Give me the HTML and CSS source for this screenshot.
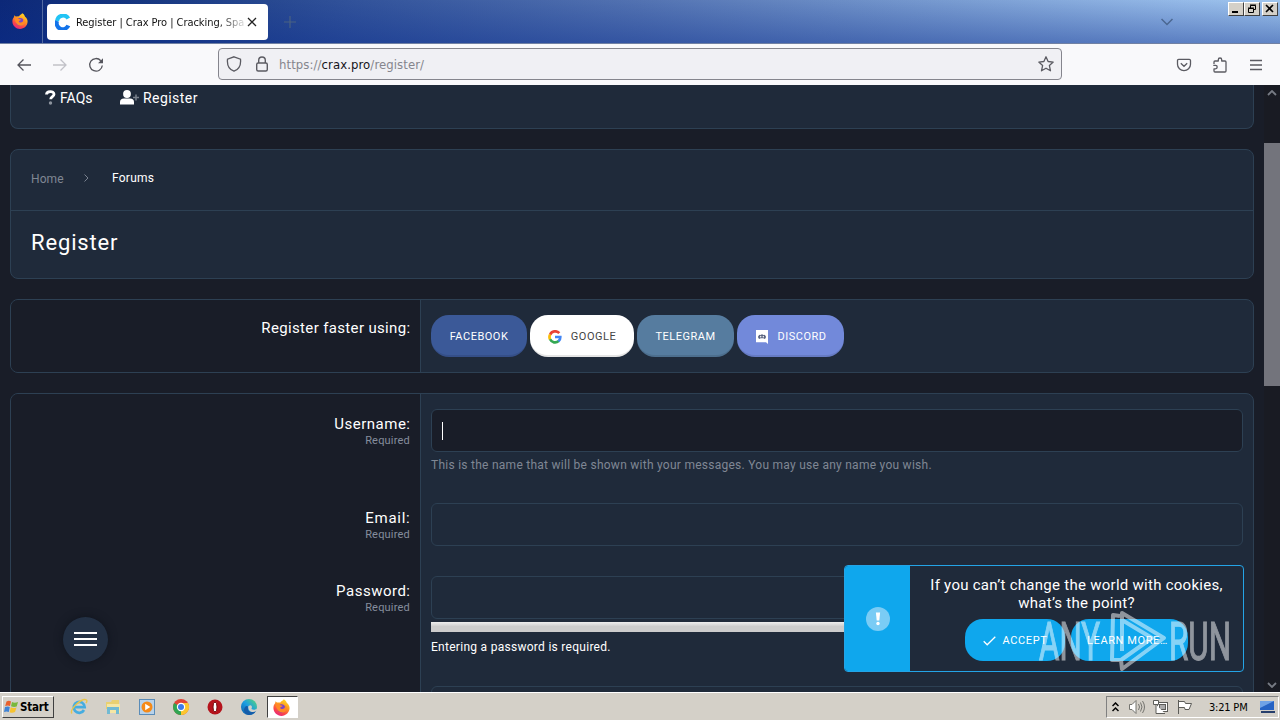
FILE: index.html
```html
<!DOCTYPE html>
<html lang="en">
<head>
<meta charset="utf-8">
<title>Register | Crax Pro</title>
<link rel="stylesheet" href="styles.css">
</head>
<body>
<svg width="0" height="0" class="defs">
  <defs>
    <linearGradient id="fox" x1=".8" y1="0" x2=".3" y2="1"><stop offset="0" stop-color="#ffe226"/><stop offset=".4" stop-color="#ff9a1f"/><stop offset=".75" stop-color="#fb4648"/><stop offset="1" stop-color="#e5257f"/></linearGradient>
    <symbol id="firefox" viewBox="0 0 16 16">
      <path d="M10.2.2c2 1.100 2.500 2.500 2.900 3.600 1.600 1.300 2.600 3 2.500 5C15.400 13 12 15.900 8 15.900S.5 12.700.4 8.700C.3 6.500 1 5 2 3.900l.4-1.700 1.300 1.200L7 3.200C7.500 1.800 9.200 1.900 10.200.2z" fill="url(#fox)"/>
      <circle cx="8" cy="8.800" r="3.900" fill="#7a45c7"/>
      <path d="M2.500 5c2-.8 3.400-.2 4.500.9l2 .5c-.2 1-1.200 1.100-2.200 1.500.1 1.900 2.600 2 3.800.9 1-1 .7-2.500-.3-3.400 3 1 3.400 4.500 1.200 6.400-3.200 2.500-8.300 0-9-6.800z" fill="#ff8a25"/>
    </symbol>
    <linearGradient id="edge" x1="0" y1="1" x2="1" y2="0"><stop offset="0" stop-color="#0c59a4"/><stop offset=".5" stop-color="#1b9de2"/><stop offset="1" stop-color="#5edb72"/></linearGradient>
  </defs>
</svg>
<div class="screen">
  <header class="tabs">
    <div class="view"><svg width="16" height="16"><use href="#firefox"/></svg></div>
    <div class="tab">
      <svg width="16" height="16" viewBox="0 0 16 16" fill="none" stroke-width="4"><path d="M13.300 4.600A6 6 0 0 0 2.100 7" stroke="#22c4f5"/><path d="M2.100 7a6 6 0 0 0 11.200 4.400" stroke="#1273ea"/></svg>
      <span class="tab-title">Register | Crax Pro | Cracking, Spa</span>
      <svg class="close" width="10" height="10" viewBox="0 0 10 10" stroke="#222" stroke-width="1.300"><path d="M1 1l8 8M9 1l-8 8"/></svg>
    </div>
    <svg class="plus" width="12" height="12" viewBox="0 0 12 12" stroke="#4a6282" stroke-width="1.200"><path d="M6 0v12M0 6h12"/></svg>
    <svg class="chev" width="12" height="8" viewBox="0 0 12 8" fill="none" stroke="#4b6791" stroke-width="1.500"><path d="M.5 1L6 6.500 11.500 1"/></svg>
    <div class="winbtns">
      <span class="wb"><svg width="13" height="11"><path d="M3 9h6" stroke="#000" stroke-width="2"/></svg></span>
      <span class="wb"><svg width="13" height="11" fill="none" stroke="#000"><path d="M5.500 5V2.500h5v4H9M5 2h6"/><path d="M3.500 5.500h5v4h-5zM3 5h6"/></svg></span>
      <span class="wb last"><svg width="13" height="11"><path d="M3 2l7 7M10 2L3 9" stroke="#000" stroke-width="1.600"/></svg></span>
    </div>
  </header>
  <div class="toolbar">
    <div class="navs">
      <svg width="16" height="16" viewBox="0 0 16 16" fill="none" stroke="#55555c" stroke-width="1.300"><path d="M15 8H2M7.500 2.500L2 8l5.500 5.500"/></svg>
      <svg width="16" height="16" viewBox="0 0 16 16" fill="none" stroke="#c2c2c8" stroke-width="1.300"><path d="M1 8h13M8.500 2.500L14 8l-5.500 5.500"/></svg>
      <svg width="16" height="16" viewBox="0 0 16 16" fill="none" stroke="#55555c" stroke-width="1.300"><path d="M12.800 3.700A6.300 6.300 0 1 0 14.300 8.500"/><path d="M10 6.200h5V1.300z" fill="#55555c" stroke="none"/></svg>
    </div>
    <div class="url">
      <svg width="16" height="16" viewBox="0 0 16 16" fill="none" stroke="#5b5b62" stroke-width="1.300"><path d="M8 .8l6.500 2.400c.5 5-1 10-6.500 12C2.500 13.200 1 8.200 1.500 3.200z"/></svg>
      <svg width="16" height="16" viewBox="0 0 16 16" fill="none" stroke="#5b5b62" stroke-width="1.400"><rect x="2.700" y="7" width="10.600" height="8" rx="1.500"/><path d="M4.700 7V4.300a3.300 3.300 0 0 1 6.600 0V7"/></svg>
      <span class="addr">https://<b>crax.pro</b>/register/</span>
      <svg class="star" width="16" height="16" viewBox="0 0 16 16" fill="none" stroke="#5b5b62" stroke-width="1.300" stroke-linejoin="round"><path d="M8 .8l2.100 4.700 5.100.6-3.800 3.500 1.100 5.200L8 12.200l-4.500 2.600 1.100-5.200L.8 6.100l5.100-.6z"/></svg>
    </div>
    <div class="tools">
      <svg width="16" height="16" viewBox="0 0 16 16" fill="none" stroke="#5b5b62" stroke-width="1.300"><path d="M1.500 3.500a1.200 1.200 0 0 1 1.200-1.200h10.600a1.200 1.200 0 0 1 1.200 1.200V7.200a6.500 6.500 0 0 1-13 0zM4.800 6.300L8 9.300l3.200-3"/></svg>
      <svg width="16" height="16" viewBox="0 0 16 16" fill="none" stroke="#5b5b62" stroke-width="1.300" stroke-linejoin="round"><path d="M2 7V5q0-1 1-1h3.300V2.700a1.700 1.700 0 0 1 3.400 0V4H13q1 0 1 1v9q0 1-1 1H3q-1 0-1-1v-2.200h1.500a1.700 1.700 0 0 0 0-3.400H1.300"/></svg>
      <svg width="16" height="16" viewBox="0 0 16 16" stroke="#5b5b62" stroke-width="1.300"><path d="M2 3.500h12M2 8h12M2 12.500h12"/></svg>
    </div>
  </div>
  <main class="page">
    <div class="content">
      <nav class="card menu">
        <svg width="11" height="15" viewBox="0 0 11 15" fill="none"><path d="M1.500 4.500C1.500.8 9 .4 9 4.300c0 2.500-3.300 2.200-3.300 5" stroke="#fff" stroke-width="2.800"/><circle cx="5.500" cy="13" r="1.700" fill="#8d949e"/></svg>
        <span class="faq">FAQs</span>
        <svg class="user" width="20" height="15" viewBox="0 0 20 15"><circle cx="7" cy="4" r="3.900" fill="#fff"/><path d="M0 14.500V12q0-3.500 4-3.500h6q4 0 4 3.500v2.500z" fill="#fff"/><path d="M16 4.500v6M13 7.500h6" stroke="#79818c" stroke-width="1.500"/></svg>
        <span class="reg">Register</span>
      </nav>
      <section class="card head">
        <div class="crumbs"><span class="home">Home</span><svg width="6" height="8" viewBox="0 0 6 8" fill="none" stroke="#79818f"><path d="M1.500.5L5 4 1.500 7.500"/></svg><span class="forums">Forums</span></div>
        <h1 class="title">Register</h1>
      </section>
      <section class="card split fast">
        <div class="left"><div class="label faster">Register faster using:</div></div>
        <div class="right providers">
          <span class="btn fb">FACEBOOK</span>
          <span class="btn gg"><svg width="14" height="14" viewBox="0 0 14 14" fill="none" stroke-width="2.700"><path d="M11.300 3.200A5.500 5.500 0 0 0 2.100 4.700" stroke="#ea4335"/><path d="M2.100 4.500a5.500 5.500 0 0 0 0 5" stroke="#fbbc05"/><path d="M2.100 9.300a5.500 5.500 0 0 0 8.600 1.800" stroke="#34a853"/><path d="M10.500 11.200A5.400 5.400 0 0 0 12.300 7H7" stroke="#4285f4"/></svg>GOOGLE</span>
          <span class="btn tg">TELEGRAM</span>
          <span class="btn dc"><svg width="14" height="14" viewBox="0 0 14 14"><path d="M1 0h12v14l-2-1.800H1z" fill="#fff"/><path d="M3 6.700l1.200-2 1.300.6.5-.8h2l.5.800 1.300-.6 1.200 2-.4 1.500-1.300.8-.8-.8h-3l-.8.800-1.300-.8z" fill="#5a6480"/><circle cx="5.700" cy="6.700" r=".8" fill="#fff"/><circle cx="8.300" cy="6.700" r=".8" fill="#fff"/></svg>DISCORD</span>
        </div>
      </section>
      <section class="card split form">
        <div class="left">
          <div class="field f1"><div class="label user-l">Username:</div><div class="req">Required</div></div>
          <div class="field f2"><div class="label email-l">Email:</div><div class="req">Required</div></div>
          <div class="field f3"><div class="label pass-l">Password:</div><div class="req">Required</div></div>
        </div>
        <div class="right inputs">
          <div class="input focus"><i class="caret"></i></div>
          <p class="hint">This is the name that will be shown with your messages. You may use any name you wish.</p>
          <div class="input email"></div>
          <div class="input pass"></div>
          <div class="meter"></div>
          <p class="needed">Entering a password is required.</p>
          <div class="input next"></div>
        </div>
      </section>
    </div>
    <div class="scroll">
      <svg width="10" height="6" viewBox="0 0 10 6" fill="none" stroke="#777b84" stroke-width="1.800"><path d="M1 5l4-4 4 4"/></svg>
      <div class="thumb"></div>
      <svg class="down" width="10" height="6" viewBox="0 0 10 6" fill="none" stroke="#777b84" stroke-width="1.800"><path d="M1 1l4 4 4-4"/></svg>
    </div>
    <div class="fab"><i></i><i></i><i></i></div>
    <aside class="cookie">
      <div class="mark"><svg width="24" height="24" viewBox="0 0 24 24"><circle cx="12" cy="12" r="12" fill="#7accf5"/><path d="M9.900 5.500h4.200l-.8 8h-2.600z" fill="#fff"/><circle cx="12" cy="16.500" r="1.700" fill="#fff"/></svg></div>
      <div class="cookie-body">
        <p class="c1">If you can’t change the world with cookies,</p>
        <p class="c2">what’s the point?</p>
        <div class="cookie-btns">
          <span class="cbtn accept"><svg width="13" height="10" viewBox="0 0 13 10" fill="none" stroke="#fff" stroke-width="1.300"><path d="M.7 5.300l3.500 3.500L12.300.7"/></svg>ACCEPT</span>
          <span class="cbtn more">LEARN MORE…</span>
        </div>
      </div>
    </aside>
    <svg class="wm" width="205" height="66" viewBox="1035 607 205 66">
      <g opacity=".5" fill="#fff" stroke="#fff" font-family="Roboto, sans-serif" font-size="53">
        <text stroke-width="1.200" x="1039" y="660" textLength="61" lengthAdjust="spacingAndGlyphs">ANY</text>
        <text stroke-width="1.200" x="1169" y="660" textLength="62" lengthAdjust="spacingAndGlyphs">RUN</text>
        <g fill="none" stroke-width="4" stroke-linejoin="round"><path d="M1122 651V613l42 25-42 31-1-9 31-22-30-18"/><path d="M1120 616l-7-1-1 45h8"/></g>
      </g>
    </svg>
  </main>
  <footer class="taskbar">
    <div class="start"><svg width="15" height="14" viewBox="0 0 15 14"><path d="M2.500 1.500Q5 0 7 1.500L6 6Q4 5 1.200 6z" fill="#e8602c"/><path d="M8 2q2.500 1.300 6 0l-1.300 4.500Q10 7.500 7 6.300z" fill="#79b83c"/><path d="M1 7q3-1 4.800 0l-1 5Q2.500 11 0 12z" fill="#3f83d5"/><path d="M6.700 7.300q2.600 1.300 5.800.2L11 12q-2.500 1.500-5.300.3z" fill="#f6c22f"/></svg><span>Start</span></div>
    <div class="apps">
      <svg width="18" height="18" viewBox="0 0 18 18" fill="none"><path d="M14 12a5.500 5.500 0 1 1 .7-2.800H5" stroke="#46ade0" stroke-width="2.700"/><path d="M2 15.500C-1 12 12-1 16.500 2q1 1-.5 3" stroke="#e9c54a" stroke-width="1.400"/></svg>
      <svg width="18" height="18" viewBox="0 0 18 18"><path d="M2 4h5l1-2h7v9H2z" fill="#e9d071"/><path d="M3 6h13v9H3z" fill="#f5e6a4"/><path d="M3 9h12v7h-3v-4H6v4H3z" fill="#72bad3"/></svg>
      <svg width="18" height="18" viewBox="0 0 18 18"><rect x="1.500" y="1.500" width="15" height="15" fill="#b8d2ea" stroke="#5a8cb8"/><circle cx="9" cy="9" r="5.500" fill="#f58a18"/><path d="M7.200 5.800L12.300 9l-5.100 3.200z" fill="#fff"/></svg>
      <svg width="18" height="18" viewBox="0 0 18 18"><circle cx="9" cy="9" r="8" fill="#e04436"/><path d="M9 9L2.100 5A8 8 0 0 0 9 17l3.500-6z" fill="#31a552"/><path d="M9 9v8a8 8 0 0 0 7-12H9z" fill="#fcc62e"/><circle cx="9" cy="9" r="4.200" fill="#fff"/><circle cx="9" cy="9" r="3" fill="#3d7bea"/></svg>
      <svg width="18" height="18" viewBox="0 0 18 18"><circle cx="9" cy="9" r="7.500" fill="#b5131c"/><ellipse cx="9" cy="9" rx="2" ry="5" fill="#fff" stroke="#750a0f"/></svg>
      <svg width="18" height="18" viewBox="0 0 18 18"><circle cx="9" cy="9" r="8" fill="url(#edge)"/><path d="M8 8.500q-1 5 3.500 5.500 3 0 5-1.500-4 6-9.500 4-5-3-2-7.500 1.500-1.500 3-.5z" fill="#155ca9"/><path d="M8.500 8q3-2 3.500 1-.5 1.500-.5 2 2 1.500 5 0L17.500 12q-3 3-7 1.500-3-2-2-5.500z" fill="#d4d0c8"/></svg>
      <div class="active"><svg width="17" height="17"><use href="#firefox"/></svg></div>
    </div>
    <div class="tray">
      <svg class="up" width="7" height="10" viewBox="0 0 7 10" fill="none" stroke="#000" stroke-width="1.500"><path d="M.5 4l3-3 3 3M.5 9l3-3 3 3"/></svg>
      <svg width="17" height="16" viewBox="0 0 17 16" fill="#fff" stroke="#74746f"><path d="M1.500 5.500H4l4-4v13l-4-4H1.500z"/><path d="M10.500 5q2 3 0 6M12.500 3.500q3 4.500 0 9M14.500 2q4 6 0 12" fill="none"/></svg>
      <svg width="17" height="16" viewBox="0 0 17 16" fill="#fff" stroke="#5c5c58"><rect x="5.500" y="3.500" width="10" height="9"/><rect x="7.500" y="5.500" width="6" height="5" fill="#aaa"/><path d="M1.500 1.500h5v4h-5zM4 5.500v9h9"/></svg>
      <svg width="17" height="16" viewBox="0 0 17 16" fill="#fff" stroke="#5c5c58"><path d="M2.500 1v14M2.500 2.500h6l1 2h6l-2.500 6H9l-.5-2h-6"/></svg>
      <span class="clock">3:21 PM</span>
      <svg class="desk" width="17" height="14" viewBox="0 0 17 14"><path d="M1 1h14v9H1z" fill="#2663c4"/><path d="M1 1h14L1 8z" fill="#6fa2e6"/><path d="M2 11h14v2H2z" fill="#263e6b"/></svg>
    </div>
  </footer>
</div>
</body>
</html>
```
FILE: styles.css
```css
* { box-sizing: border-box; }
body { margin: 0; font-family: Roboto, sans-serif; }
p, h1 { margin: 0; font-weight: 400; }
svg { display: block; flex: none; }
.defs { position: absolute; }
.screen { width: 1280px; height: 720px; overflow: hidden; display: flex; flex-direction: column; }
.tabs { height: 44px; flex: none; display: flex; align-items: center; border-bottom: 1px solid #7181a3;
  background: linear-gradient(rgba(10,36,120,0), rgba(10,44,140,.42)), linear-gradient(97deg, #0c2878 0, #16367f 10%, #31529a 27%, #5373b2 50%, #7699cf 72%, #95bae8 92%, #a0c6ee 100%); }
.view { width: 43px; height: 43px; padding: 13px 0 0 12px; border-right: 1px solid #536ba2; }
.tab { width: 221px; height: 36px; margin-left: 4px; padding: 0 10px 0 8px; background: #fff; border-radius: 4px; display: flex; align-items: center; }
.tab-title { width: 168px; margin: 1px 0 0 5px; white-space: nowrap; font: 11px "DejaVu Sans Condensed", "DejaVu Sans", sans-serif; font-stretch: condensed; letter-spacing: -.05px; color: transparent; background: linear-gradient(90deg, #111 85%, #ddd 100%); background-clip: text; -webkit-background-clip: text; }
.close { margin-left: 3px; }
.plus { margin-left: 16px; }
.chev { margin-left: 865px; }
.winbtns { display: flex; margin: 0 2px 0 auto; align-self: flex-start; padding-top: 2px; }
.wb { width: 16px; height: 14px; background: #d4d0c8; border: 1px solid; border-color: #fff #404040 #404040 #fff; }
.wb.last { margin-left: 2px; }
.toolbar { height: 41px; flex: none; display: flex; align-items: center; background: #f9f9fb; }
.navs { width: 218px; display: flex; gap: 20px; padding-left: 16px; }
.url { width: 844px; height: 32px; margin-top: -1px; border: 1px solid #85858d; border-radius: 4px; background: #f0f0f4; display: flex; align-items: center; padding: 0 7px; gap: 12px; }
.addr { font: 13px "DejaVu Sans Condensed", "DejaVu Sans", sans-serif; font-stretch: condensed; color: #85858d; margin-left: -3px; letter-spacing: .08px; }
.addr b { font-weight: 400; color: #15141a; }
.star { margin-left: auto; }
.tools { display: flex; gap: 20px; margin-left: 114px; }
.page { height: 607px; flex: none; position: relative; display: flex; background: #191d28; overflow: hidden; }
.content { width: 1264px; padding: 0 10px; display: flex; flex-direction: column; gap: 20px; }
.card { flex: none; width: 1244px; border: 1px solid #2d4053; border-radius: 8px; background: #1f2a3a; color: #fff; }
.menu { height: 44px; border-top: 0; border-radius: 0 0 8px 8px; display: flex; padding: 5px 0 0 34px; font-size: 14px; line-height: 17px; }
.faq { margin-left: 4px; width: 32px; letter-spacing: 0; }
.user { margin-left: 28px; }
.reg { margin-left: 3px; letter-spacing: .45px; }
.head { height: 130px; }
.crumbs { height: 61px; border-bottom: 1px solid #2d4053; display: flex; align-items: center; padding: 0 20px 4px; font-size: 12px; }
.home { width: 52px; color: #7f8793; letter-spacing: .1px; padding-top: 1px; }
.forums { margin-left: 23px; letter-spacing: .25px; }
.title { font-size: 22px; line-height: 26px; padding: 19px 20px; letter-spacing: .85px; }
.split { display: flex; overflow: hidden; }
.left { width: 410px; background: #191d28; border-right: 1px solid #2d4053; padding-right: 10px; text-align: right; }
.right { flex: 1; padding: 0 10px; }
.fast { height: 74px; }
.label { font-size: 15px; line-height: 18px; letter-spacing: .5px; margin-right: -.5px; }
.faster { padding-top: 19px; letter-spacing: .35px; }
.email-l { letter-spacing: .75px; }
.providers { display: flex; align-items: center; gap: 3px; }
.btn { height: 42px; border-radius: 18px; display: flex; align-items: center; justify-content: center; font-size: 11px; letter-spacing: .5px; gap: 9px; padding-top: 2px; border-bottom: 2px solid rgba(0,0,0,.1); }
.fb { width: 96px; background: #3b5998; }
.gg { width: 104px; background: #fff; color: #444; }
.tg { width: 97px; background: #567c9f; }
.dc { width: 107px; background: #7289da; }
.btn svg { margin-top: 2px; }
.form { height: 340px; border-radius: 8px 8px 0 0; }
.field { height: 94px; padding-top: 21px; }
.f3 { padding-top: 0; }
.field.f3 { margin-top: 0; }
.req { font-size: 11px; line-height: 16px; color: #858d9d; letter-spacing: .2px; }
.inputs { padding-top: 15px; }
.input { height: 43px; border: 1px solid #2d4053; border-radius: 6px; background: #1f2a3a; }
.focus { background: #191d28; padding: 12px 10px; }
.caret { display: block; width: 1px; height: 18px; background: #fff; }
.hint { font-size: 12px; line-height: 16px; color: #7f8794; padding-top: 5px; white-space: nowrap; letter-spacing: .26px; }
.email { margin-top: 30px; }
.pass { margin-top: 30px; }
.meter { height: 10px; margin-top: 3px; background: linear-gradient(#eee, #ccc 45%); }
.needed { font-size: 12px; line-height: 16px; margin-top: 7px; letter-spacing: .28px; }
.next { margin-top: 31px; }
.scroll { width: 16px; padding-top: 5px; display: flex; flex-direction: column; align-items: center; background: #191b23; }
.thumb { width: 16px; height: 243px; margin-top: 47px; background: #73747c; flex: none; }
.down { margin: auto 0 4px; }
.fab { position: absolute; left: 63px; top: 532px; width: 45px; height: 45px; border-radius: 50%; background: #233145; box-shadow: 0 0 8px #10141d; padding: 15px 11px; display: flex; flex-direction: column; gap: 4px; }
.fab i { height: 2px; background: #fff; }
.cookie { position: absolute; left: 844px; top: 480px; width: 400px; height: 107px; display: flex; border: 1px solid #24a4e6; border-radius: 4px; overflow: hidden; background: #1f2a3a; color: #fff; }
.mark { width: 65px; display: flex; align-items: center; justify-content: center; background: #0fa7ed; }
.cookie-body { flex: 1; text-align: center; padding-top: 10px; font-size: 15px; line-height: 18px; white-space: nowrap; letter-spacing: .27px; }
.cookie-btns { display: flex; gap: 6px; padding: 7px 0 0 55px; }
.cbtn { height: 42px; border-radius: 18px; background: #0fa7ed; font-size: 11px; letter-spacing: .6px; display: flex; align-items: center; justify-content: center; gap: 7px; padding-top: 2px; }
.accept { width: 100px; }
.more { width: 117px; padding-right: 22px; padding-left: 18px; }
.wm { position: absolute; left: 1035px; top: 522px; }
.taskbar { height: 28px; flex: none; display: flex; align-items: center; padding: 1px 0 0 2px; border-top: 1px solid #fff; background: #d4d0c8; }
.start { width: 52px; height: 22px; border: 1px solid; border-color: #fff #404040 #404040 #fff; display: flex; align-items: center; padding-left: 1px; gap: 1px; font: bold 11.500px "DejaVu Sans Condensed", "DejaVu Sans", sans-serif; font-stretch: condensed; letter-spacing: -.2px; }
.apps { display: flex; align-items: center; gap: 16px; margin-left: 16px; }
.active { width: 31px; height: 22px; margin-left: -7px; padding: 2px 5px; background: #fff; border: 1px solid; border-color: #404040 #fff #fff #404040; }
.tray { width: 173px; height: 22px; margin: 0 1px 0 auto; border: 1px solid; border-color: #808080 #fff #fff #808080; display: flex; align-items: center; padding-left: 5px; gap: 7px; }
.tray .up { margin-right: 2px; }
.clock { font: 11px "DejaVu Sans Condensed", "DejaVu Sans", sans-serif; font-stretch: condensed; letter-spacing: -.2px; margin-left: 9px; white-space: nowrap; }
.desk { margin: 0 2px 0 auto; }
```
